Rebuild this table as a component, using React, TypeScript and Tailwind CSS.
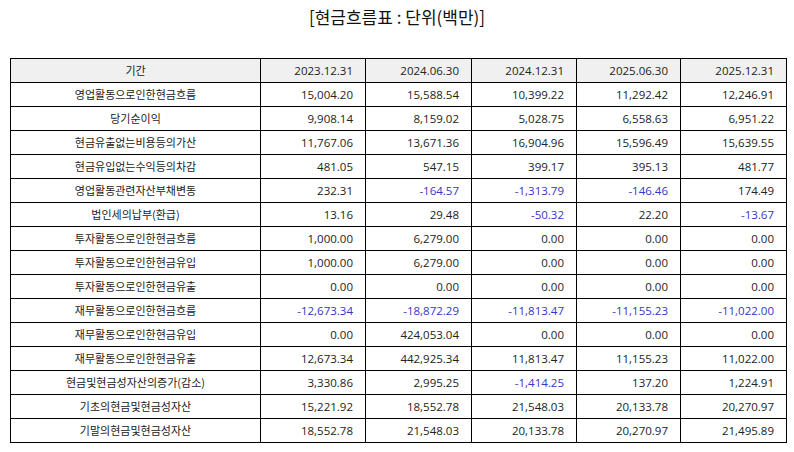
const periods = ["2023.12.31", "2024.06.30", "2024.12.31", "2025.06.30", "2025.12.31"];

const rows: [string, string[]][] = [
  ["영업활동으로인한현금흐름", ["15,004.20", "15,588.54", "10,399.22", "11,292.42", "12,246.91"]],
  ["당기순이익", ["9,908.14", "8,159.02", "5,028.75", "6,558.63", "6,951.22"]],
  ["현금유출없는비용등의가산", ["11,767.06", "13,671.36", "16,904.96", "15,596.49", "15,639.55"]],
  ["현금유입없는수익등의차감", ["481.05", "547.15", "399.17", "395.13", "481.77"]],
  ["영업활동관련자산부채변동", ["232.31", "-164.57", "-1,313.79", "-146.46", "174.49"]],
  ["법인세의납부(환급)", ["13.16", "29.48", "-50.32", "22.20", "-13.67"]],
  ["투자활동으로인한현금흐름", ["1,000.00", "6,279.00", "0.00", "0.00", "0.00"]],
  ["투자활동으로인한현금유입", ["1,000.00", "6,279.00", "0.00", "0.00", "0.00"]],
  ["투자활동으로인한현금유출", ["0.00", "0.00", "0.00", "0.00", "0.00"]],
  ["재무활동으로인한현금흐름", ["-12,673.34", "-18,872.29", "-11,813.47", "-11,155.23", "-11,022.00"]],
  ["재무활동으로인한현금유입", ["0.00", "424,053.04", "0.00", "0.00", "0.00"]],
  ["재무활동으로인한현금유출", ["12,673.34", "442,925.34", "11,813.47", "11,155.23", "11,022.00"]],
  ["현금및현금성자산의증가(감소)", ["3,330.86", "2,995.25", "-1,414.25", "137.20", "1,224.91"]],
  ["기초의현금및현금성자산", ["15,221.92", "18,552.78", "21,548.03", "20,133.78", "20,270.97"]],
  ["기말의현금및현금성자산", ["18,552.78", "21,548.03", "20,133.78", "20,270.97", "21,495.89"]],
];

export default function App() {
  return (
    <div className="w-[794px] h-[452px] bg-white text-[#222] font-['Noto_Sans_CJK_KR','Noto_Sans',sans-serif]">
      {/* Title */}
      <h1 className="pt-[4px] text-center text-[17px] leading-[26px] text-[#111]">[현금흐름표 : 단위(백만)]</h1>

      {/* Table */}
      <table className="mt-[28px] ml-[10px] w-[776px] table-fixed border-collapse">
        <colgroup>
          <col className="w-[250px]" />
          <col className="w-[105px]" />
          <col className="w-[106px]" />
          <col className="w-[105px]" />
          <col className="w-[104px]" />
          <col className="w-[106px]" />
        </colgroup>
        <thead>
          <tr className="h-[24px] bg-[#f0f0f0]">
            <th className="border border-black font-normal text-center text-[11px] p-0">기간</th>
            {periods.map((p) => (
              <th
                key={p}
                className="border border-black font-normal text-right text-[11.5px] font-['Open_Sans','Noto_Sans',sans-serif] pr-[12px] p-0"
              >
                {p}
              </th>
            ))}
          </tr>
        </thead>
        <tbody>
          {rows.map(([label, values]) => (
            <tr key={label} className="h-[24px]">
              <td className="border border-black text-center text-[11px] p-0">{label}</td>
              {values.map((v, i) => (
                <td
                  key={i}
                  className={`border border-black text-right text-[11.5px] font-['Open_Sans','Noto_Sans',sans-serif] pr-[12px] p-0 ${
                    v.startsWith("-") ? "text-[#3535c8]" : ""
                  }`}
                >
                  {v}
                </td>
              ))}
            </tr>
          ))}
        </tbody>
      </table>
    </div>
  );
}
